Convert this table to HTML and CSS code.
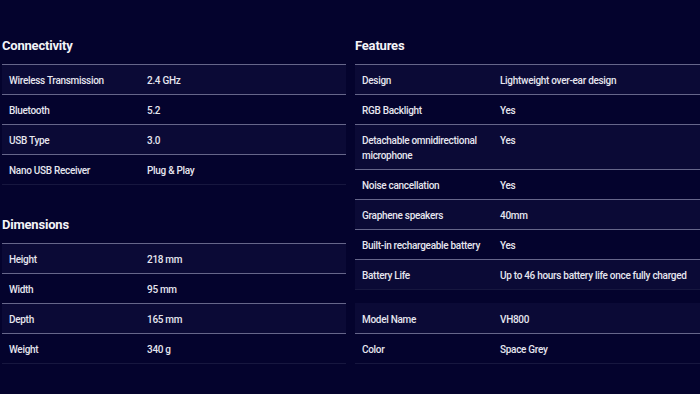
FILE: index.html
```html
<!DOCTYPE html>
<html>
<head>
<meta charset="utf-8">
<link rel="stylesheet" href="styles.css">
</head>
<body>
<div class="specs">
  <div class="col">
    <section class="group">
      <h2 class="title">Connectivity</h2>
      <div class="table">
        <div class="row"><div class="k">Wireless Transmission</div><div class="v">2.4 GHz</div></div>
        <div class="row"><div class="k">Bluetooth</div><div class="v">5.2</div></div>
        <div class="row"><div class="k">USB Type</div><div class="v">3.0</div></div>
        <div class="row"><div class="k">Nano USB Receiver</div><div class="v">Plug &amp; Play</div></div>
      </div>
    </section>
    <section class="group group-next">
      <h2 class="title">Dimensions</h2>
      <div class="table">
        <div class="row"><div class="k">Height</div><div class="v">218 mm</div></div>
        <div class="row"><div class="k">Width</div><div class="v">95 mm</div></div>
        <div class="row"><div class="k">Depth</div><div class="v">165 mm</div></div>
        <div class="row"><div class="k">Weight</div><div class="v">340 g</div></div>
      </div>
    </section>
  </div>
  <div class="col">
    <section class="group">
      <h2 class="title">Features</h2>
      <div class="table">
        <div class="row"><div class="k">Design</div><div class="v">Lightweight over-ear design</div></div>
        <div class="row"><div class="k">RGB Backlight</div><div class="v">Yes</div></div>
        <div class="row"><div class="k">Detachable omnidirectional microphone</div><div class="v">Yes</div></div>
        <div class="row"><div class="k">Noise cancellation</div><div class="v">Yes</div></div>
        <div class="row"><div class="k">Graphene speakers</div><div class="v">40mm</div></div>
        <div class="row"><div class="k">Built-in rechargeable battery</div><div class="v">Yes</div></div>
        <div class="row"><div class="k">Battery Life</div><div class="v">Up to 46 hours battery life once fully charged</div></div>
      </div>
    </section>
    <section class="group group-plain">
      <div class="table table-plain">
        <div class="row"><div class="k">Model Name</div><div class="v">VH800</div></div>
        <div class="row"><div class="k">Color</div><div class="v">Space Grey</div></div>
      </div>
    </section>
  </div>
</div>
</body>
</html>
```
FILE: styles.css
```css
html, body {
  margin: 0;
  padding: 0;
  background: #04032d;
  overflow: hidden;
}
body {
  font-family: Roboto, "Liberation Sans", sans-serif;
  color: #e6e6ef;
  width: 700px;
  height: 394px;
}
.specs {
  display: grid;
  grid-template-columns: 344px 345px;
  column-gap: 9px;
  padding: 37px 0 0 2px;
  align-items: start;
}
.title {
  margin: 0 0 9px 0;
  font-size: 13px;
  line-height: 18px;
  font-weight: 700;
  color: #f4f4f8;
  letter-spacing: -0.2px;
}
.group-next {
  margin-top: 31px;
}
.group-plain {
  margin-top: 13px;
}
.table {
  border-bottom: 1px solid #17173f;
}
.row {
  display: grid;
  grid-template-columns: 138px 1fr;
  padding: 8px 7px 6px 7px;
  border-top: 1px solid #66668a;
  font-size: 10px;
  line-height: 15px;
  font-weight: 500;
  letter-spacing: -0.3px;
}
.row:nth-child(odd) {
  background: #0b0a36;
}
.table-plain .row:first-child {
  border-top: 0;
  padding-top: 9px;
}
.k {
  padding-right: 8px;
}
.v {
  white-space: nowrap;
}
```
